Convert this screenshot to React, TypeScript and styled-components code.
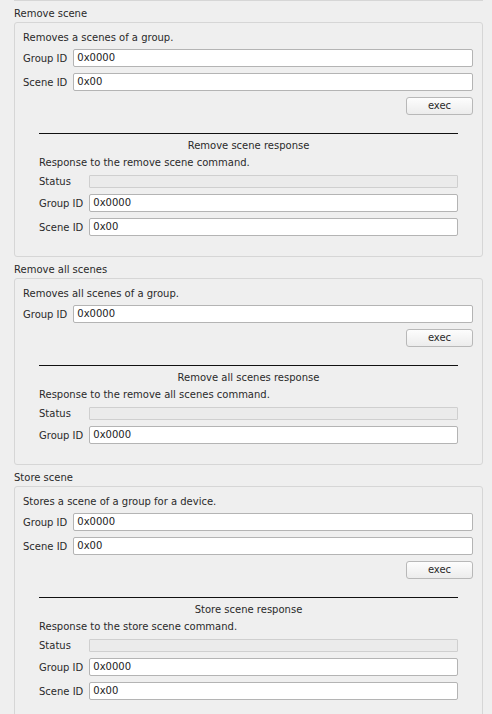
import React from "react";
import styled, { createGlobalStyle } from "styled-components";

const GlobalStyle = createGlobalStyle`
  html, body {
    margin: 0;
    padding: 0;
    background: #efefef;
  }
  body {
    font-family: "DejaVu Sans", "Liberation Sans", sans-serif;
    font-size: 10px;
    color: #2a2a2a;
  }
`;

const Page = styled.div`
  width: 492px;
  height: 714px;
  overflow: hidden;
  box-sizing: border-box;
  padding: 0 9px 0 14px;
`;

const PrevBoxEdge = styled.div`
  height: 0;
  border-bottom: 1px solid #d6d6d6;
`;

const SectionTitle = styled.div`
  line-height: 14px;
  padding: 6px 0 1px 0;
  white-space: nowrap;
`;

const GroupBox = styled.div`
  border: 1px solid #d6d6d6;
  border-radius: 3px;
  background: #efefef;
  padding: 8px 9px 20px 8px;
`;

const Description = styled.div`
  line-height: 14px;
  white-space: nowrap;
`;

const Form = styled.div<{ $top: number }>`
  display: grid;
  grid-template-columns: auto 1fr;
  column-gap: 6px;
  row-gap: 6px;
  margin-top: ${(p) => p.$top}px;
  align-items: center;
`;

const Label = styled.div`
  line-height: 13px;
  white-space: nowrap;
`;

const Field = styled.div`
  height: 18px;
  box-sizing: border-box;
  background: #ffffff;
  border: 1px solid #b4b4b4;
  border-radius: 2px;
  padding: 0 3px;
  line-height: 16px;
  color: #222;
  white-space: nowrap;
`;

const StatusField = styled.div`
  height: 13px;
  box-sizing: border-box;
  background: #ebebeb;
  border: 1px solid #cfcfcf;
  border-radius: 1px;
`;

const ButtonRow = styled.div`
  display: flex;
  justify-content: flex-end;
  margin-top: 6px;
`;

const ExecButton = styled.div`
  width: 67px;
  height: 18px;
  box-sizing: border-box;
  border: 1px solid #b8b8b8;
  border-radius: 3px;
  background: linear-gradient(#fdfdfd, #ececec);
  text-align: center;
  line-height: 16px;
  color: #2a2a2a;
`;

const Response = styled.div`
  margin: 18px 15px 0 16px;
  border-top: 1px solid #111;
`;

const ResponseTitle = styled.div`
  text-align: center;
  line-height: 14px;
  margin-top: 5px;
`;

const ResponseDescription = styled.div`
  line-height: 14px;
  margin-top: 3px;
  white-space: nowrap;
`;

type Param = { label: string; value: string };

type Command = {
  title: string;
  description: string;
  params: Param[];
  responseTitle: string;
  responseDescription: string;
  responseParams: Param[];
};

const groupId: Param = { label: "Group ID", value: "0x0000" };
const sceneId: Param = { label: "Scene ID", value: "0x00" };

const commands: Command[] = [
  {
    title: "Remove scene",
    description: "Removes a scenes of a group.",
    params: [groupId, sceneId],
    responseTitle: "Remove scene response",
    responseDescription: "Response to the remove scene command.",
    responseParams: [groupId, sceneId],
  },
  {
    title: "Remove all scenes",
    description: "Removes all scenes of a group.",
    params: [groupId],
    responseTitle: "Remove all scenes response",
    responseDescription: "Response to the remove all scenes command.",
    responseParams: [groupId],
  },
  {
    title: "Store scene",
    description: "Stores a scene of a group for a device.",
    params: [groupId, sceneId],
    responseTitle: "Store scene response",
    responseDescription: "Response to the store scene command.",
    responseParams: [groupId, sceneId],
  },
];

function CommandSection({ cmd }: { cmd: Command }) {
  return (
    <>
      <SectionTitle>{cmd.title}</SectionTitle>
      <GroupBox>
        <Description>{cmd.description}</Description>
        <Form $top={4}>
          {cmd.params.map((p) => (
            <React.Fragment key={p.label}>
              <Label>{p.label}</Label>
              <Field>{p.value}</Field>
            </React.Fragment>
          ))}
        </Form>
        <ButtonRow>
          <ExecButton>exec</ExecButton>
        </ButtonRow>
        <Response>
          <ResponseTitle>{cmd.responseTitle}</ResponseTitle>
          <ResponseDescription>{cmd.responseDescription}</ResponseDescription>
          <Form $top={5}>
            <Label>Status</Label>
            <StatusField />
            {cmd.responseParams.map((p) => (
              <React.Fragment key={p.label}>
                <Label>{p.label}</Label>
                <Field>{p.value}</Field>
              </React.Fragment>
            ))}
          </Form>
        </Response>
      </GroupBox>
    </>
  );
}

export default function App() {
  return (
    <>
      <GlobalStyle />
      <Page>
        <PrevBoxEdge />
        {commands.map((c) => (
          <CommandSection key={c.title} cmd={c} />
        ))}
      </Page>
    </>
  );
}
